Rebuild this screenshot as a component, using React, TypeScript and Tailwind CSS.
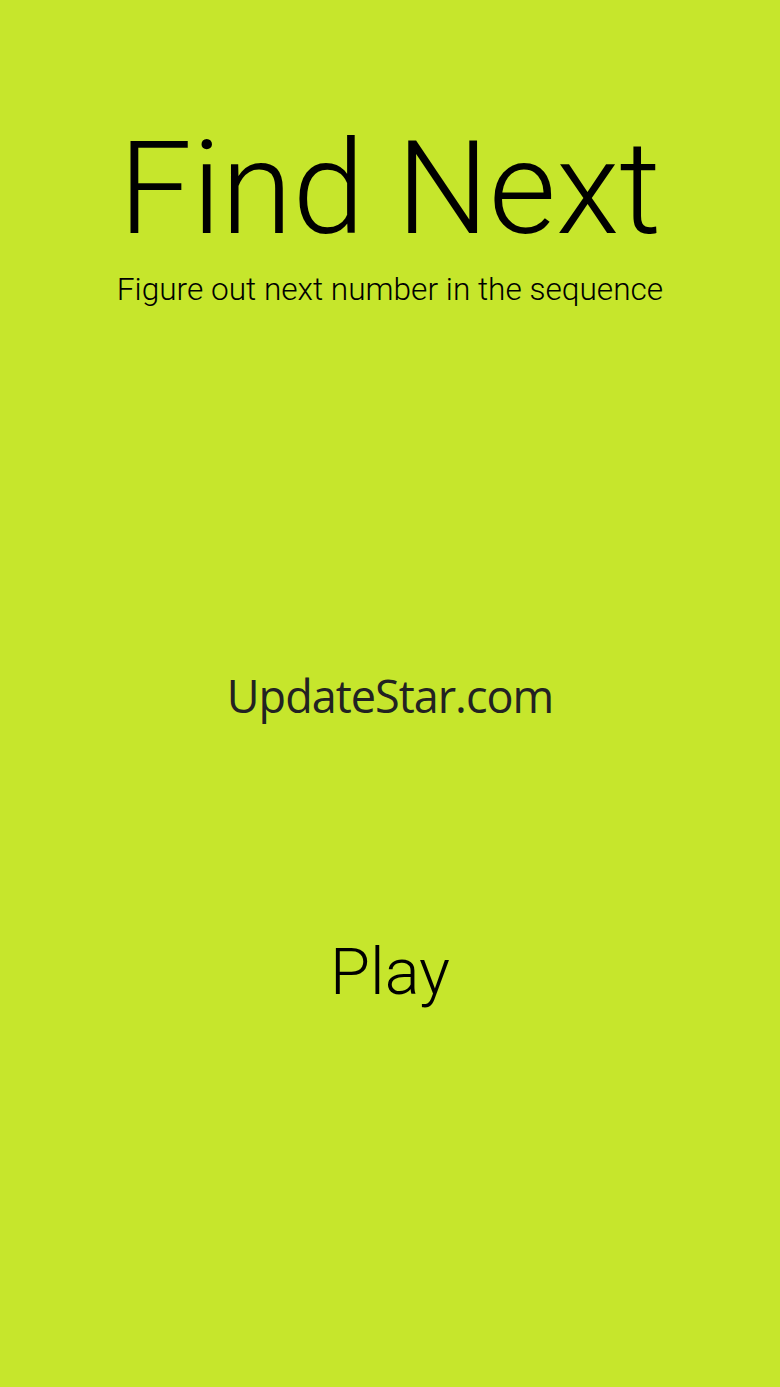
export default function App() {
  return (
    <div className="w-[780px] h-[1387px] bg-[#c6e62c] flex flex-col items-center text-black font-['Roboto','Liberation_Sans',sans-serif]">
      <h1 className="mt-[124px] text-[130px] leading-none font-light">Find Next</h1>
      <p className="mt-[20px] text-[31.6px] leading-none font-light">Figure out next number in the sequence</p>
      <div className="mt-[367px] text-[45px] leading-none tracking-[-1px] text-[#222] font-['Open_Sans','Noto_Sans',sans-serif]">
        UpdateStar.com
      </div>
      <button className="mt-[222px] text-[65px] leading-none font-light">Play</button>
    </div>
  );
}
